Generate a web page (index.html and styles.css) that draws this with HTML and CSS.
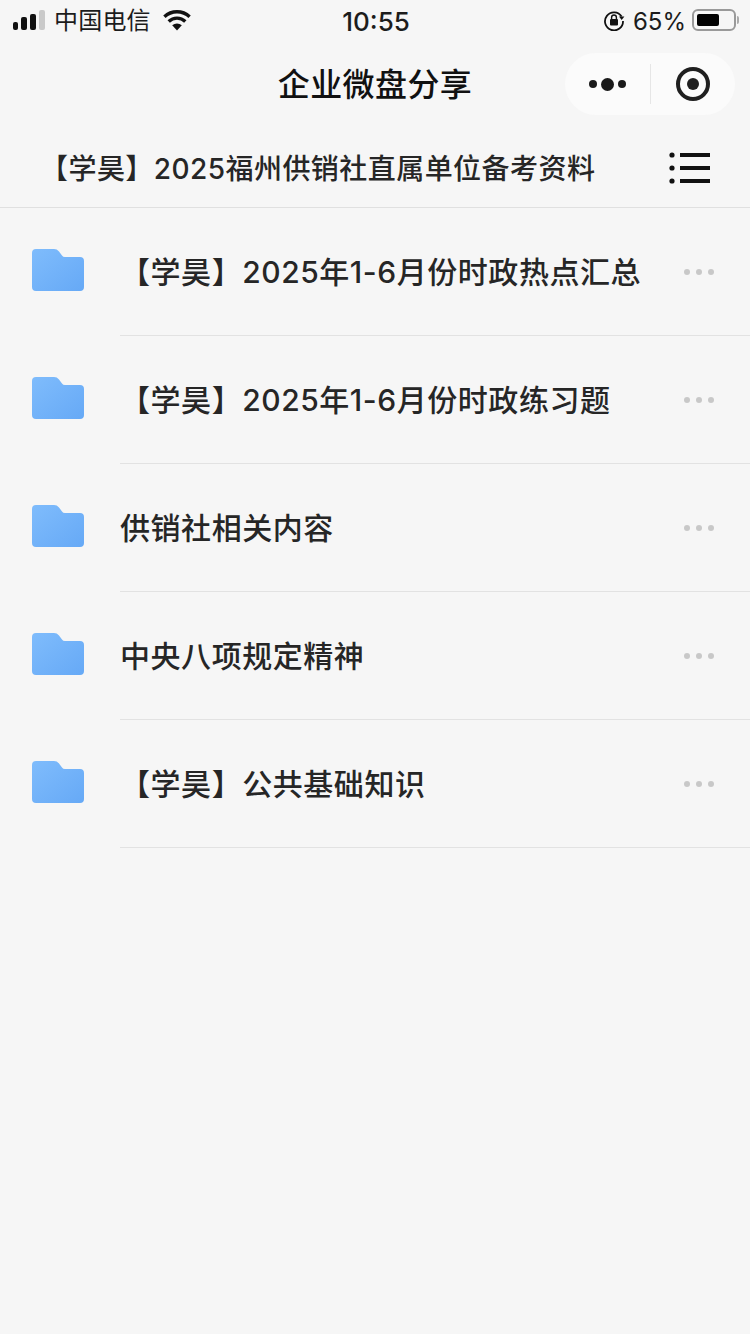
FILE: index.html

```html
<!DOCTYPE html>
<html>
<head>
<meta charset="utf-8">
<title>企业微盘分享</title>
<link rel="stylesheet" href="styles.css">
</head>

<body>
<div class="status">
    <div class="status-left">
        <div class="signal"><i class="b1"></i><i class="b2"></i><i class="b3"></i><i class="b4"></i></div>
        <span class="carrier">中国电信</span>
        <svg class="wifi" width="30" height="22" viewBox="0 0 30 22">
            <path d="M15 21.5 10.2 16.3a7 7 0 0 1 9.6 0Z" fill="#111"/>
            <path d="M6.7 12.5a12 12 0 0 1 16.6 0" fill="none" stroke="#111" stroke-width="3.4"/>
            <path d="M2.4 7.8a18.4 18.4 0 0 1 25.2 0" fill="none" stroke="#111" stroke-width="3.4"/>
        </svg>
    </div>
    <div class="time">10:55</div>
    <div class="status-right">
        <svg class="lock" width="22" height="22" viewBox="0 0 22 22">
            <path d="M18.6 7.5A9 9 0 1 0 20 12" fill="none" stroke="#111" stroke-width="1.8"/>
            <path d="M16 7.5h5.4l-2.7 3.4Z" fill="#111"/>
            <rect x="7" y="10" width="8" height="6.4" rx="1" fill="#111"/>
            <path d="M8.6 10V8.4a2.4 2.4 0 0 1 4.8 0V10" fill="none" stroke="#111" stroke-width="1.4"/>
        </svg>
        <span class="percent">65%</span>
        <div class="battery"><div class="battery-fill"></div></div>
        <div class="battery-tip"></div>
    </div>
</div>

<div class="nav">
    <div class="nav-title">企业微盘分享</div>
    <div class="capsule">
        <div class="capsule-more"><i></i><i class="big"></i><i></i></div>
        <div class="capsule-line"></div>
        <div class="capsule-close"><i></i></div>
    </div>
</div>

<div class="crumb">
    <div class="crumb-text">【学昊】2025福州供销社直属单位备考资料</div>
    <svg width="42" height="32" viewBox="0 0 42 32">
        <circle cx="4" cy="3" r="2.6" fill="#111"/>
        <circle cx="4" cy="16" r="2.6" fill="#111"/>
        <circle cx="4" cy="29" r="2.6" fill="#111"/>
        <rect x="12" y="1" width="30" height="4" fill="#111"/>
        <rect x="12" y="14" width="30" height="4" fill="#111"/>
        <rect x="12" y="27" width="30" height="4" fill="#111"/>
    </svg>
</div>

<div class="list">
    <div class="row">
        <svg class="folder" width="52" height="42" viewBox="0 0 52 42"><use href="#folder-shape"/></svg>
        <div class="row-body">
            <div class="row-name">【学昊】2025年1-6月份时政热点汇总</div>
            <div class="row-more"><i></i><i></i><i></i></div>
        </div>
    </div>
    <div class="row">
        <svg class="folder" width="52" height="42" viewBox="0 0 52 42"><use href="#folder-shape"/></svg>
        <div class="row-body">
            <div class="row-name">【学昊】2025年1-6月份时政练习题</div>
            <div class="row-more"><i></i><i></i><i></i></div>
        </div>
    </div>
    <div class="row">
        <svg class="folder" width="52" height="42" viewBox="0 0 52 42"><use href="#folder-shape"/></svg>
        <div class="row-body">
            <div class="row-name">供销社相关内容</div>
            <div class="row-more"><i></i><i></i><i></i></div>
        </div>
    </div>
    <div class="row">
        <svg class="folder" width="52" height="42" viewBox="0 0 52 42"><use href="#folder-shape"/></svg>
        <div class="row-body">
            <div class="row-name">中央八项规定精神</div>
            <div class="row-more"><i></i><i></i><i></i></div>
        </div>
    </div>
    <div class="row">
        <svg class="folder" width="52" height="42" viewBox="0 0 52 42"><use href="#folder-shape"/></svg>
        <div class="row-body">
            <div class="row-name">【学昊】公共基础知识</div>
            <div class="row-more"><i></i><i></i><i></i></div>
        </div>
    </div>
</div>

<svg class="defs" width="0" height="0">
    <defs>
        <linearGradient id="folder-fill" x1="0" y1="0" x2="1" y2="1">
            <stop offset="0" stop-color="#7fbcfc"/>
            <stop offset="1" stop-color="#66a9f6"/>
        </linearGradient>
        <symbol id="folder-shape" viewBox="0 0 52 42">
            <path d="M4 0H22Q25 0 27 2.4L30 6.5Q31 8 33 8H48Q52 8 52 12V38Q52 42 48 42H4Q0 42 0 38V4Q0 0 4 0Z" fill="url(#folder-fill)"/>
        </symbol>
    </defs>
</svg>
</body>
</html>
```

FILE: styles.css

```css
* {
  box-sizing: border-box;
}

body {
  margin: 0;
  width: 750px;
  height: 1334px;
  overflow: hidden;
  background: #f6f6f6;
  color: #262626;
  font-family: "Inter", "Noto Sans CJK SC", sans-serif;
}

i {
  display: block;
}

.defs {
  position: absolute;
}

/* status bar */
.status {
  display: grid;
  grid-template-columns: 1fr auto 1fr;
  align-items: center;
  height: 40px;
  padding: 0 11px 0 13px;
  color: #1c1c1c;
}

.status-left,
.status-right {
  display: flex;
  align-items: center;
}

.status-right {
  justify-content: flex-end;
}

.signal {
  display: flex;
  align-items: flex-end;
  gap: 3px;
  height: 20px;
}

.signal i {
  background: #111;
  border-radius: 2px;
}

.signal .b1 { width: 5px; height: 8px; }
.signal .b2 { width: 6px; height: 13px; }
.signal .b3 { width: 6px; height: 16px; }
.signal .b4 { width: 6px; height: 20px; background: #c9c9c9; }

.carrier {
  margin: 2px 0 0 9px;
  font-size: 24px;
  line-height: 32px;
  letter-spacing: 0.2px;
}

.wifi {
  margin-left: 11px;
}

.time {
  margin-top: 2px;
  font-size: 26px;
  font-weight: 500;
}

.lock {
  margin-right: 8px;
}

.percent {
  margin-top: 2px;
  margin-right: 6px;
  font-size: 24px;
}

.battery {
  width: 44px;
  height: 22px;
  padding: 3px;
  border: 2px solid #999;
  border-radius: 6px;
}

.battery-fill {
  width: 65%;
  height: 100%;
  background: #000;
  border-radius: 2px;
}

.battery-tip {
  width: 2px;
  height: 8px;
  margin-left: 1px;
  background: #aaa;
  border-radius: 0 2px 2px 0;
}

/* title bar */
.nav {
  position: relative;
  display: flex;
  align-items: center;
  justify-content: center;
  height: 88px;
  padding-bottom: 4px;
}

.nav-title {
  font-size: 32px;
  font-weight: 500;
  letter-spacing: 0.4px;
  color: #111;
}

.capsule {
  position: absolute;
  top: 13px;
  right: 15px;
  display: flex;
  align-items: center;
  width: 170px;
  height: 62px;
  background: #fbfbfb;
  border-radius: 31px;
}

.capsule-more {
  display: flex;
  align-items: center;
  justify-content: center;
  gap: 4px;
  width: 85px;
}

.capsule-more i {
  width: 8px;
  height: 8px;
  border-radius: 50%;
  background: #1a1a1a;
}

.capsule-more .big {
  width: 13px;
  height: 13px;
}

.capsule-line {
  width: 1px;
  height: 40px;
  background: #e6e6e6;
}

.capsule-close {
  display: flex;
  align-items: center;
  justify-content: center;
  width: 84px;
}

.capsule-close i {
  width: 34px;
  height: 34px;
  border: 4px solid #1f1f1f;
  border-radius: 50%;
  position: relative;
}

.capsule-close i::after {
  content: "";
  position: absolute;
  top: 7px;
  left: 7px;
  width: 12px;
  height: 12px;
  border-radius: 50%;
  background: #1f1f1f;
}

/* folder path */
.crumb {
  display: flex;
  align-items: center;
  justify-content: space-between;
  height: 80px;
  padding: 0 40px;
  border-bottom: 1px solid #e0e0e0;
}

.crumb-text {
  margin-bottom: 2px;
  font-size: 28px;
  font-weight: 500;
  letter-spacing: 0.45px;
  white-space: nowrap;
}

/* list */
.row {
  display: flex;
  height: 128px;
}

.folder {
  margin: 41px 36px 0 32px;
  flex: none;
}

.row-body {
  flex: 1;
  display: flex;
  align-items: center;
  justify-content: space-between;
  padding: 0 36px 4px 0;
  border-bottom: 1px solid #e2e2e2;
}

.row-name {
  font-size: 30px;
  font-weight: 500;
  letter-spacing: 0.55px;
  white-space: nowrap;
}

.row-more {
  display: flex;
  gap: 6px;
  margin-top: 4px;
}

.row-more i {
  width: 6px;
  height: 6px;
  border-radius: 50%;
  background: #c8c8c8;
}
```
